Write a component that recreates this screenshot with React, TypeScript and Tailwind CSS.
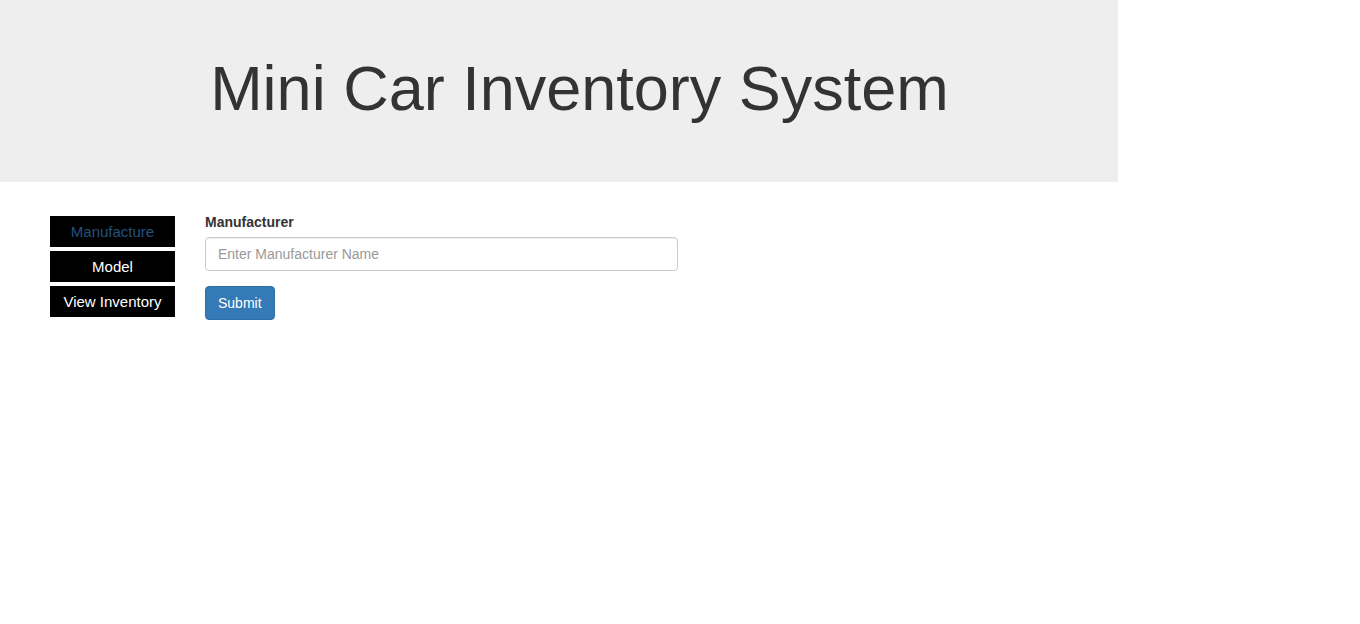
import React from "react";

export default function App() {
  const font = { fontFamily: '"Liberation Sans", Arial, sans-serif' };
  return (
    <div className="min-h-[624px] bg-white text-[#333]" style={font}>
      <div className="w-[1118px] h-[182px] bg-[#eeeeee] pt-[54px] pl-[41px] text-center">
        <h1 className="text-[63px] leading-[1.1] font-normal text-[#333]">Mini Car Inventory System</h1>
      </div>
      <div className="flex pt-[34px] pl-[50px]">
        <div className="flex flex-col gap-[4px] w-[125px]">
          <div className="h-[31px] pt-[2px] bg-black flex items-center justify-center text-[15px] text-[#23527c]">Manufacture</div>
          <div className="h-[31px] pt-[2px] bg-black flex items-center justify-center text-[15px] text-white">Model</div>
          <div className="h-[31px] pt-[2px] bg-black flex items-center justify-center text-[15px] text-white">View Inventory</div>
        </div>
        <div className="ml-[30px] -mt-[4px] w-[473px]">
          <label className="block text-[14px] leading-[20px] font-bold mb-[5px] text-[#333]">Manufacturer</label>
          <input
            type="text"
            placeholder="Enter Manufacturer Name"
            className="block w-[473px] h-[34px] px-[12px] py-[6px] text-[14px] border border-[#cccccc] rounded-[4px] shadow-[inset_0_1px_1px_rgba(0,0,0,0.075)] placeholder:text-[#999] outline-none"
            style={font}
          />
          <button
            className="mt-[15px] h-[34px] px-[12px] text-[14px] text-white bg-[#337ab7] border border-[#2e6da4] rounded-[4px]"
            style={font}
          >
            Submit
          </button>
        </div>
      </div>
    </div>
  );
}
